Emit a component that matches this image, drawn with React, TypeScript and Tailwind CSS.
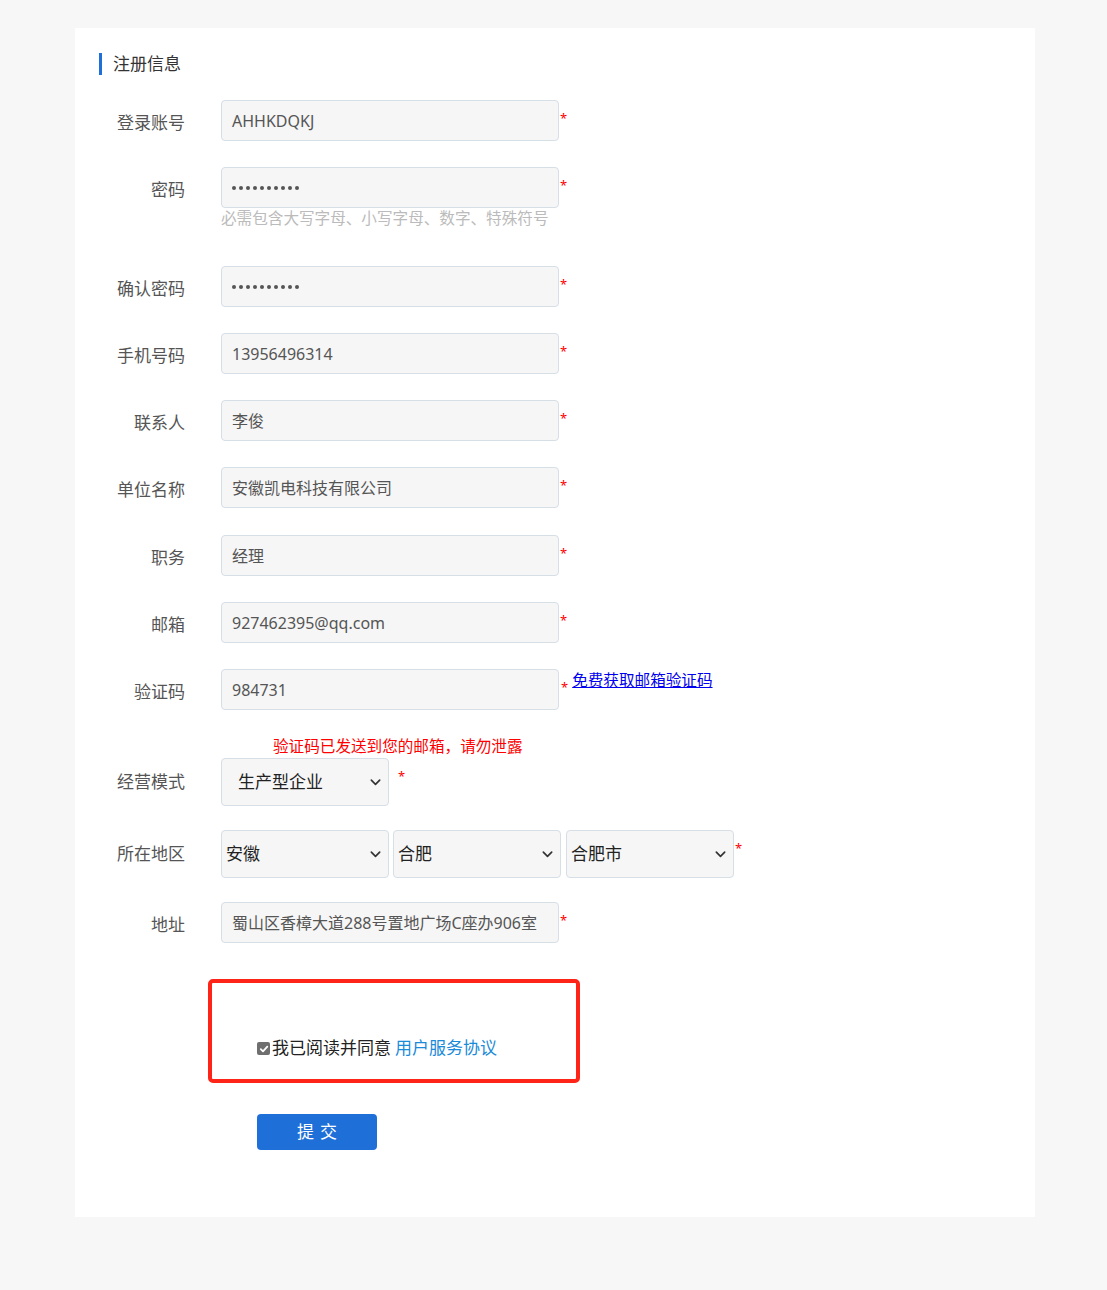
import React from "react";

const font = { fontFamily: '"Microsoft YaHei", "Noto Sans", "Noto Sans CJK SC", sans-serif' };

function Star({ className = "" }: { className?: string }) {
  return <span className={"text-[13px] leading-none text-[#ff0000] " + className}>*</span>;
}

function Chevron() {
  return (
    <svg className="pointer-events-none absolute right-[6px] top-1/2 -translate-y-1/2" width="13" height="13" viewBox="0 0 14 14">
      <path d="M2.5 5 L7 9.5 L11.5 5" fill="none" stroke="#333" strokeWidth="1.8" strokeLinecap="round" strokeLinejoin="round" />
    </svg>
  );
}

function Dots() {
  return (
    <span className="flex gap-[3px]">
      {Array.from({ length: 10 }).map((_, i) => (
        <span key={i} className="h-[4px] w-[4px] rounded-full bg-[#555]" />
      ))}
    </span>
  );
}

function Row({ label, value, className = "", password = false }: { label: string; value: string; className?: string; password?: boolean }) {
  return (
    <div className={"flex items-center " + className}>
      <div className="w-[86px] shrink-0 pt-[4px] text-right text-[17px] text-[#555]">{label}</div>
      <div className="ml-[36px] flex h-[41px] w-[338px] items-center rounded-[4px] border border-[#d6dee6] bg-[#f6f6f6] pl-[10px] text-[16px] text-[#555]">
        {password ? <Dots /> : value}
      </div>
      <Star className="self-start mt-[12px] ml-[1px]" />
    </div>
  );
}

export default function App() {
  return (
    <div className="min-h-[1290px] bg-[#f7f7f7] pt-[28px]" style={font}>
      <div className="ml-[75px] w-[960px] bg-white pb-[67px] pl-[24px] pt-[25px]">
        <div className="flex h-[22px] items-center">
          <div className="h-[22px] w-[3px] bg-[#1f6fd9]" />
          <div className="ml-[11px] text-[17px] leading-[22px] text-[#333]">注册信息</div>
        </div>

        <Row label="登录账号" value="AHHKDQKJ" className="mt-[25px]" />
        <Row label="密码" value="" password className="mt-[26px]" />
        <div className="ml-[122px] h-[20px] text-[15.6px] leading-[20px] text-[#bbb]">必需包含大写字母、小写字母、数字、特殊符号</div>
        <Row label="确认密码" value="" password className="mt-[38px]" />
        <Row label="手机号码" value="13956496314" className="mt-[26px]" />
        <Row label="联系人" value="李俊" className="mt-[26px]" />
        <Row label="单位名称" value="安徽凯电科技有限公司" className="mt-[26px]" />
        <Row label="职务" value="经理" className="mt-[27px]" />
        <Row label="邮箱" value="927462395@qq.com" className="mt-[26px]" />

        <div className="mt-[26px] flex items-center">
          <div className="w-[86px] shrink-0 pt-[4px] text-right text-[17px] text-[#555]">验证码</div>
          <div className="ml-[36px] flex h-[41px] w-[338px] items-center rounded-[4px] border border-[#d6dee6] bg-[#f6f6f6] pl-[10px] text-[16px] text-[#555]">984731</div>
          <Star className="self-start mt-[12px] ml-[2px]" />
          <a href="#" className="ml-[4px] self-start mt-[1px] text-[15.6px] leading-[20px] text-[#0000ee] underline">免费获取邮箱验证码</a>
        </div>

        <div className="mt-[26px] ml-[174px] h-[20px] text-[15.6px] leading-[20px] text-[#ff0000]">验证码已发送到您的邮箱，请勿泄露</div>

        <div className="mt-[2px] flex items-center">
          <div className="w-[86px] shrink-0 text-right text-[17px] text-[#555]">经营模式</div>
          <div className="relative ml-[36px] h-[48px] w-[168px] rounded-[4px] border border-[#d6dee6] bg-[#f6f6f6]">
            <div className="flex h-full items-center pl-[16px] text-[17px] text-[#222]">生产型企业</div>
            <Chevron />
          </div>
          <Star className="self-start mt-[12px] ml-[9px]" />
        </div>

        <div className="mt-[24px] flex items-center">
          <div className="w-[86px] shrink-0 text-right text-[17px] text-[#555]">所在地区</div>
          <div className="ml-[36px] flex gap-[4px]">
            {["安徽", "合肥", "合肥市"].map((t, i) => (
              <div key={t} className={"relative h-[48px] w-[168px] rounded-[4px] border border-[#d6dee6] bg-[#f6f6f6] " + (i === 2 ? "ml-[1px]" : "")}>
                <div className="flex h-full items-center pl-[4px] text-[17px] text-[#222]">{t}</div>
                <Chevron />
              </div>
            ))}
          </div>
          <Star className="self-start mt-[12px] ml-[1px]" />
        </div>

        <Row label="地址" value="蜀山区香樟大道288号置地广场C座办906室" className="mt-[24px]" />

        <div className="mt-[36px] ml-[109px] flex h-[104px] w-[372px] items-start rounded-[5px] border-[4px] border-[#ff2418] pl-[45px] pt-[53px]">
          <span className="mt-[6px] flex h-[13px] w-[13px] items-center justify-center rounded-[2px] bg-[#6f6f6f]">
            <svg width="10" height="10" viewBox="0 0 10 10">
              <path d="M1.8 5.2 L4 7.4 L8.3 2.6" fill="none" stroke="#fff" strokeWidth="1.8" strokeLinecap="round" strokeLinejoin="round" />
            </svg>
          </span>
          <span className="ml-[2px] text-[17px] leading-[24px] text-[#222]">我已阅读并同意</span>
          <a href="#" className="ml-[4px] text-[17px] leading-[24px] text-[#1a8ad9]">用户服务协议</a>
        </div>

        <button className="mt-[31px] ml-[158px] flex h-[36px] w-[120px] items-center justify-center rounded-[4px] bg-[#1f6fd9] text-[17px] tracking-[6px] text-white">
          <span className="ml-[6px]">提交</span>
        </button>
      </div>
    </div>
  );
}
